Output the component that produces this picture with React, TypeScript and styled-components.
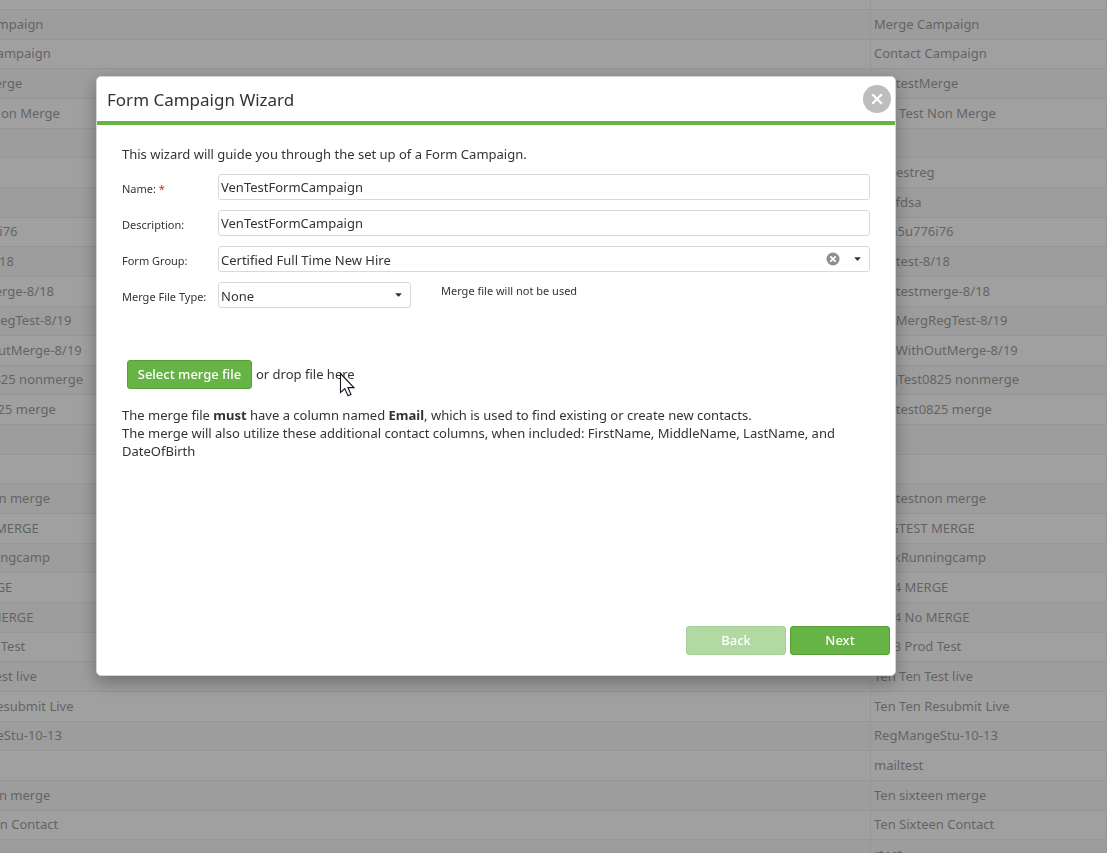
import React, { useState } from "react";
import styled, { createGlobalStyle } from "styled-components";

const GlobalStyle = createGlobalStyle`
  *, *::before, *::after { box-sizing: border-box; }
  body {
    margin: 0;
    overflow: hidden;
    background: #fff;
    color: #333;
    font: 13px/18px "Noto Sans", "Open Sans", sans-serif;
  }
  button, input, select { font: inherit; color: inherit; margin: 0; }
`;

const GridViewport = styled.main`
  height: 100vh;
  overflow: hidden;
`;

/* The grid is scrolled sideways, so its first column starts off-screen. */
const GridTable = styled.table`
  width: calc(100% + 65px);
  margin: -20px 0 0 -65px;
  border-collapse: separate;
  border-spacing: 0;
  table-layout: fixed;
`;

const NameColumn = styled.col`
  width: 936px;
`;

const GridRow = styled.tr`
  height: 30px;
  &:nth-child(even) { background: #f3f3f3; }
  &:nth-child(3n):nth-child(-n + 12),
  &:nth-child(3n + 14) { height: 29px; }
`;

const GridCell = styled.td`
  padding: 0 3px 2px;
  border-right: 1px solid #dcdcdc;
  border-bottom: 1px solid #dcdcdc;
  white-space: nowrap;
  overflow: hidden;
`;

const Overlay = styled.div`
  position: fixed;
  inset: 0;
  display: flex;
  align-items: flex-start;
  padding: 76px 211px 0 96px;
  background: rgba(119, 119, 119, 0.7);
`;

const Dialog = styled.section`
  flex: 1;
  min-width: 0;
  min-height: 600px;
  display: flex;
  flex-direction: column;
  border: 1px solid #d4d4d4;
  border-radius: 5px;
  background: #fff;
  box-shadow: 0 6px 18px rgba(0, 0, 0, 0.3);
`;

const DialogHeader = styled.header`
  display: flex;
  align-items: center;
  justify-content: space-between;
  height: 48px;
  padding: 0 4px 0 10px;
  border-bottom: 4px solid #68b546;
`;

const DialogTitle = styled.h1`
  margin: 0;
  padding-top: 2px;
  font-size: 17px;
  line-height: 24px;
  font-weight: 400;
`;

const CloseButton = styled.button`
  display: grid;
  place-items: center;
  width: 28px;
  height: 28px;
  padding: 0;
  border: 0;
  border-radius: 50%;
  background: #bdbdbd;
`;

const DialogBody = styled.div`
  flex: 1;
  padding: 20px 25px 0;
`;

const Intro = styled.p`
  margin: 0 0 11px;
`;

const Fields = styled.form`
  display: grid;
  row-gap: 10px;
`;

const Field = styled.div`
  display: grid;
  grid-template-columns: 96px minmax(0, 1fr);
  align-items: center;
`;

const Label = styled.label`
  padding-top: 3px;
  font-size: 11px;
  white-space: nowrap;
`;

const Required = styled.span`
  color: #e02020;
`;

const TextInput = styled.input`
  width: 100%;
  height: 26px;
  padding: 0 2px;
  border: 1px solid #d9d9d9;
  border-radius: 3px;
  background: #fff;
  outline: none;
`;

const FieldLine = styled.div`
  display: flex;
  gap: 30px;
`;

const SelectBox = styled.div<{ $width: string }>`
  position: relative;
  width: ${(p) => p.$width};
`;

const Select = styled.select`
  appearance: none;
  display: block;
  width: 100%;
  height: 26px;
  padding: 2px 48px 0 2px;
  border: 1px solid #d9d9d9;
  border-radius: 3px;
  background: #fff;
  outline: none;
`;

const SelectTools = styled.div`
  position: absolute;
  inset: 0 9px 0 auto;
  display: flex;
  align-items: center;
  gap: 14px;
  pointer-events: none;
`;

const ClearButton = styled.button`
  display: grid;
  padding: 0;
  border: 0;
  background: none;
  pointer-events: auto;
`;

const Hint = styled.span`
  font-size: 11px;
`;

const UploadRow = styled.div`
  display: flex;
  align-items: center;
  gap: 4px;
  margin: 52px 0 17px 5px;
`;

const DropHint = styled.span`
  position: relative;
  padding-bottom: 2px;
`;

const Pointer = styled.svg`
  position: absolute;
  left: 83px;
  top: 7px;
`;

const Button = styled.button<{ $width: number }>`
  width: ${(p) => p.$width}px;
  height: 29px;
  padding: 0 0 2px;
  border: 1px solid #589f3a;
  border-radius: 3px;
  background: #66b346;
  color: #fff;
  font-weight: 500;
  white-space: nowrap;
  &:disabled { border-color: #a6cf97; background: #b1d9a1; }
`;

const Note = styled.p`
  margin: 0;
`;

const DialogFooter = styled.footer`
  display: flex;
  justify-content: flex-end;
  gap: 4px;
  padding: 0 5px 20px;
`;

const campaigns = [
  "",
  "Merge Campaign",
  "Contact Campaign",
  "TentestMerge",
  "Ten Test Non Merge",
  "",
  "Netestreg",
  "asdfdsa",
  "u6h5u776i76",
  "Tentest-8/18",
  "Tentestmerge-8/18",
  "TenMergRegTest-8/19",
  "TenWithOutMerge-8/19",
  "RegTest0825 nonmerge",
  "Tentest0825 merge",
  "",
  "",
  "Tentestnon merge",
  "REGTEST MERGE",
  "TaskRunningcamp",
  "9/14 MERGE",
  "9/14 No MERGE",
  "9/13 Prod Test",
  "Ten Ten Test live",
  "Ten Ten Resubmit Live",
  "RegMangeStu-10-13",
  "mailtest",
  "Ten sixteen merge",
  "Ten Sixteen Contact",
  "rtest",
];

const unnamed = ["mailtest"];

const Caret = () => (
  <svg width="7" height="4" viewBox="0 0 7 4" aria-hidden="true">
    <path d="M0.2 0.3H6.8L4 3.5H3Z" fill="#333" />
  </svg>
);

export default function App() {
  const [name, setName] = useState("VenTestFormCampaign");
  const [description, setDescription] = useState("VenTestFormCampaign");
  const [group, setGroup] = useState("Certified Full Time New Hire");

  return (
    <>
      <GlobalStyle />
      <GridViewport>
        <GridTable>
          <colgroup>
            <NameColumn />
            <col />
          </colgroup>
          <tbody>
            {campaigns.map((title, i) => (
              <GridRow key={i}>
                <GridCell>{unnamed.includes(title) ? "" : title}</GridCell>
                <GridCell>{title}</GridCell>
              </GridRow>
            ))}
          </tbody>
        </GridTable>
      </GridViewport>
      <Overlay>
        <Dialog role="dialog" aria-labelledby="wizard-title">
          <DialogHeader>
            <DialogTitle id="wizard-title">Form Campaign Wizard</DialogTitle>
            <CloseButton type="button" aria-label="Close">
              <svg width="12" height="12" viewBox="0 0 12 12" aria-hidden="true">
                <path d="M1.2 1.2L10.8 10.8M10.8 1.2L1.2 10.8" stroke="#fff" strokeWidth="2.2" />
              </svg>
            </CloseButton>
          </DialogHeader>
          <DialogBody>
            <Intro>This wizard will guide you through the set up of a Form Campaign.</Intro>
            <Fields>
              <Field>
                <Label htmlFor="name">
                  Name: <Required>*</Required>
                </Label>
                <TextInput id="name" value={name} onChange={(e) => setName(e.target.value)} />
              </Field>
              <Field>
                <Label htmlFor="description">Description:</Label>
                <TextInput
                  id="description"
                  value={description}
                  onChange={(e) => setDescription(e.target.value)}
                />
              </Field>
              <Field>
                <Label htmlFor="group">Form Group:</Label>
                <SelectBox $width="100%">
                  <Select id="group" value={group} onChange={(e) => setGroup(e.target.value)}>
                    <option value="" />
                    <option>Certified Full Time New Hire</option>
                  </Select>
                  <SelectTools>
                    <ClearButton type="button" aria-label="Clear form group" onClick={() => setGroup("")}>
                      <svg width="14" height="14" viewBox="0 0 14 14" aria-hidden="true">
                        <circle cx="7" cy="7" r="6.5" fill="#8f8f8f" />
                        <path d="M4.3 4.3L9.7 9.7M9.7 4.3L4.3 9.7" stroke="#fff" strokeWidth="1.8" />
                      </svg>
                    </ClearButton>
                    <Caret />
                  </SelectTools>
                </SelectBox>
              </Field>
              <Field>
                <Label htmlFor="merge-type">Merge File Type:</Label>
                <FieldLine>
                  <SelectBox $width="193px">
                    <Select id="merge-type" defaultValue="None">
                      <option>None</option>
                    </Select>
                    <SelectTools>
                      <Caret />
                    </SelectTools>
                  </SelectBox>
                  <Hint>Merge file will not be used</Hint>
                </FieldLine>
              </Field>
            </Fields>
            <UploadRow>
              <Button type="button" $width={125}>
                Select merge file
              </Button>
              <DropHint>
                or drop file here
                <Pointer width="16" height="26" viewBox="0 0 16 26" aria-hidden="true">
                  <path
                    d="M1.5 1.5V20.5L5.8 16.6L9 23.8L12 22.5L8.9 15.6H14.8Z"
                    fill="#fff"
                    stroke="#151520"
                    strokeWidth="1.1"
                  />
                </Pointer>
              </DropHint>
            </UploadRow>
            <Note>
              The merge file <b>must</b> have a column named <b>Email</b>, which is used to find existing or
              create new contacts.
              <br />
              The merge will also utilize these additional contact columns, when included: FirstName,
              MiddleName, LastName, and DateOfBirth
            </Note>
          </DialogBody>
          <DialogFooter>
            <Button type="button" $width={100} disabled>
              Back
            </Button>
            <Button type="button" $width={100}>
              Next
            </Button>
          </DialogFooter>
        </Dialog>
      </Overlay>
    </>
  );
}
